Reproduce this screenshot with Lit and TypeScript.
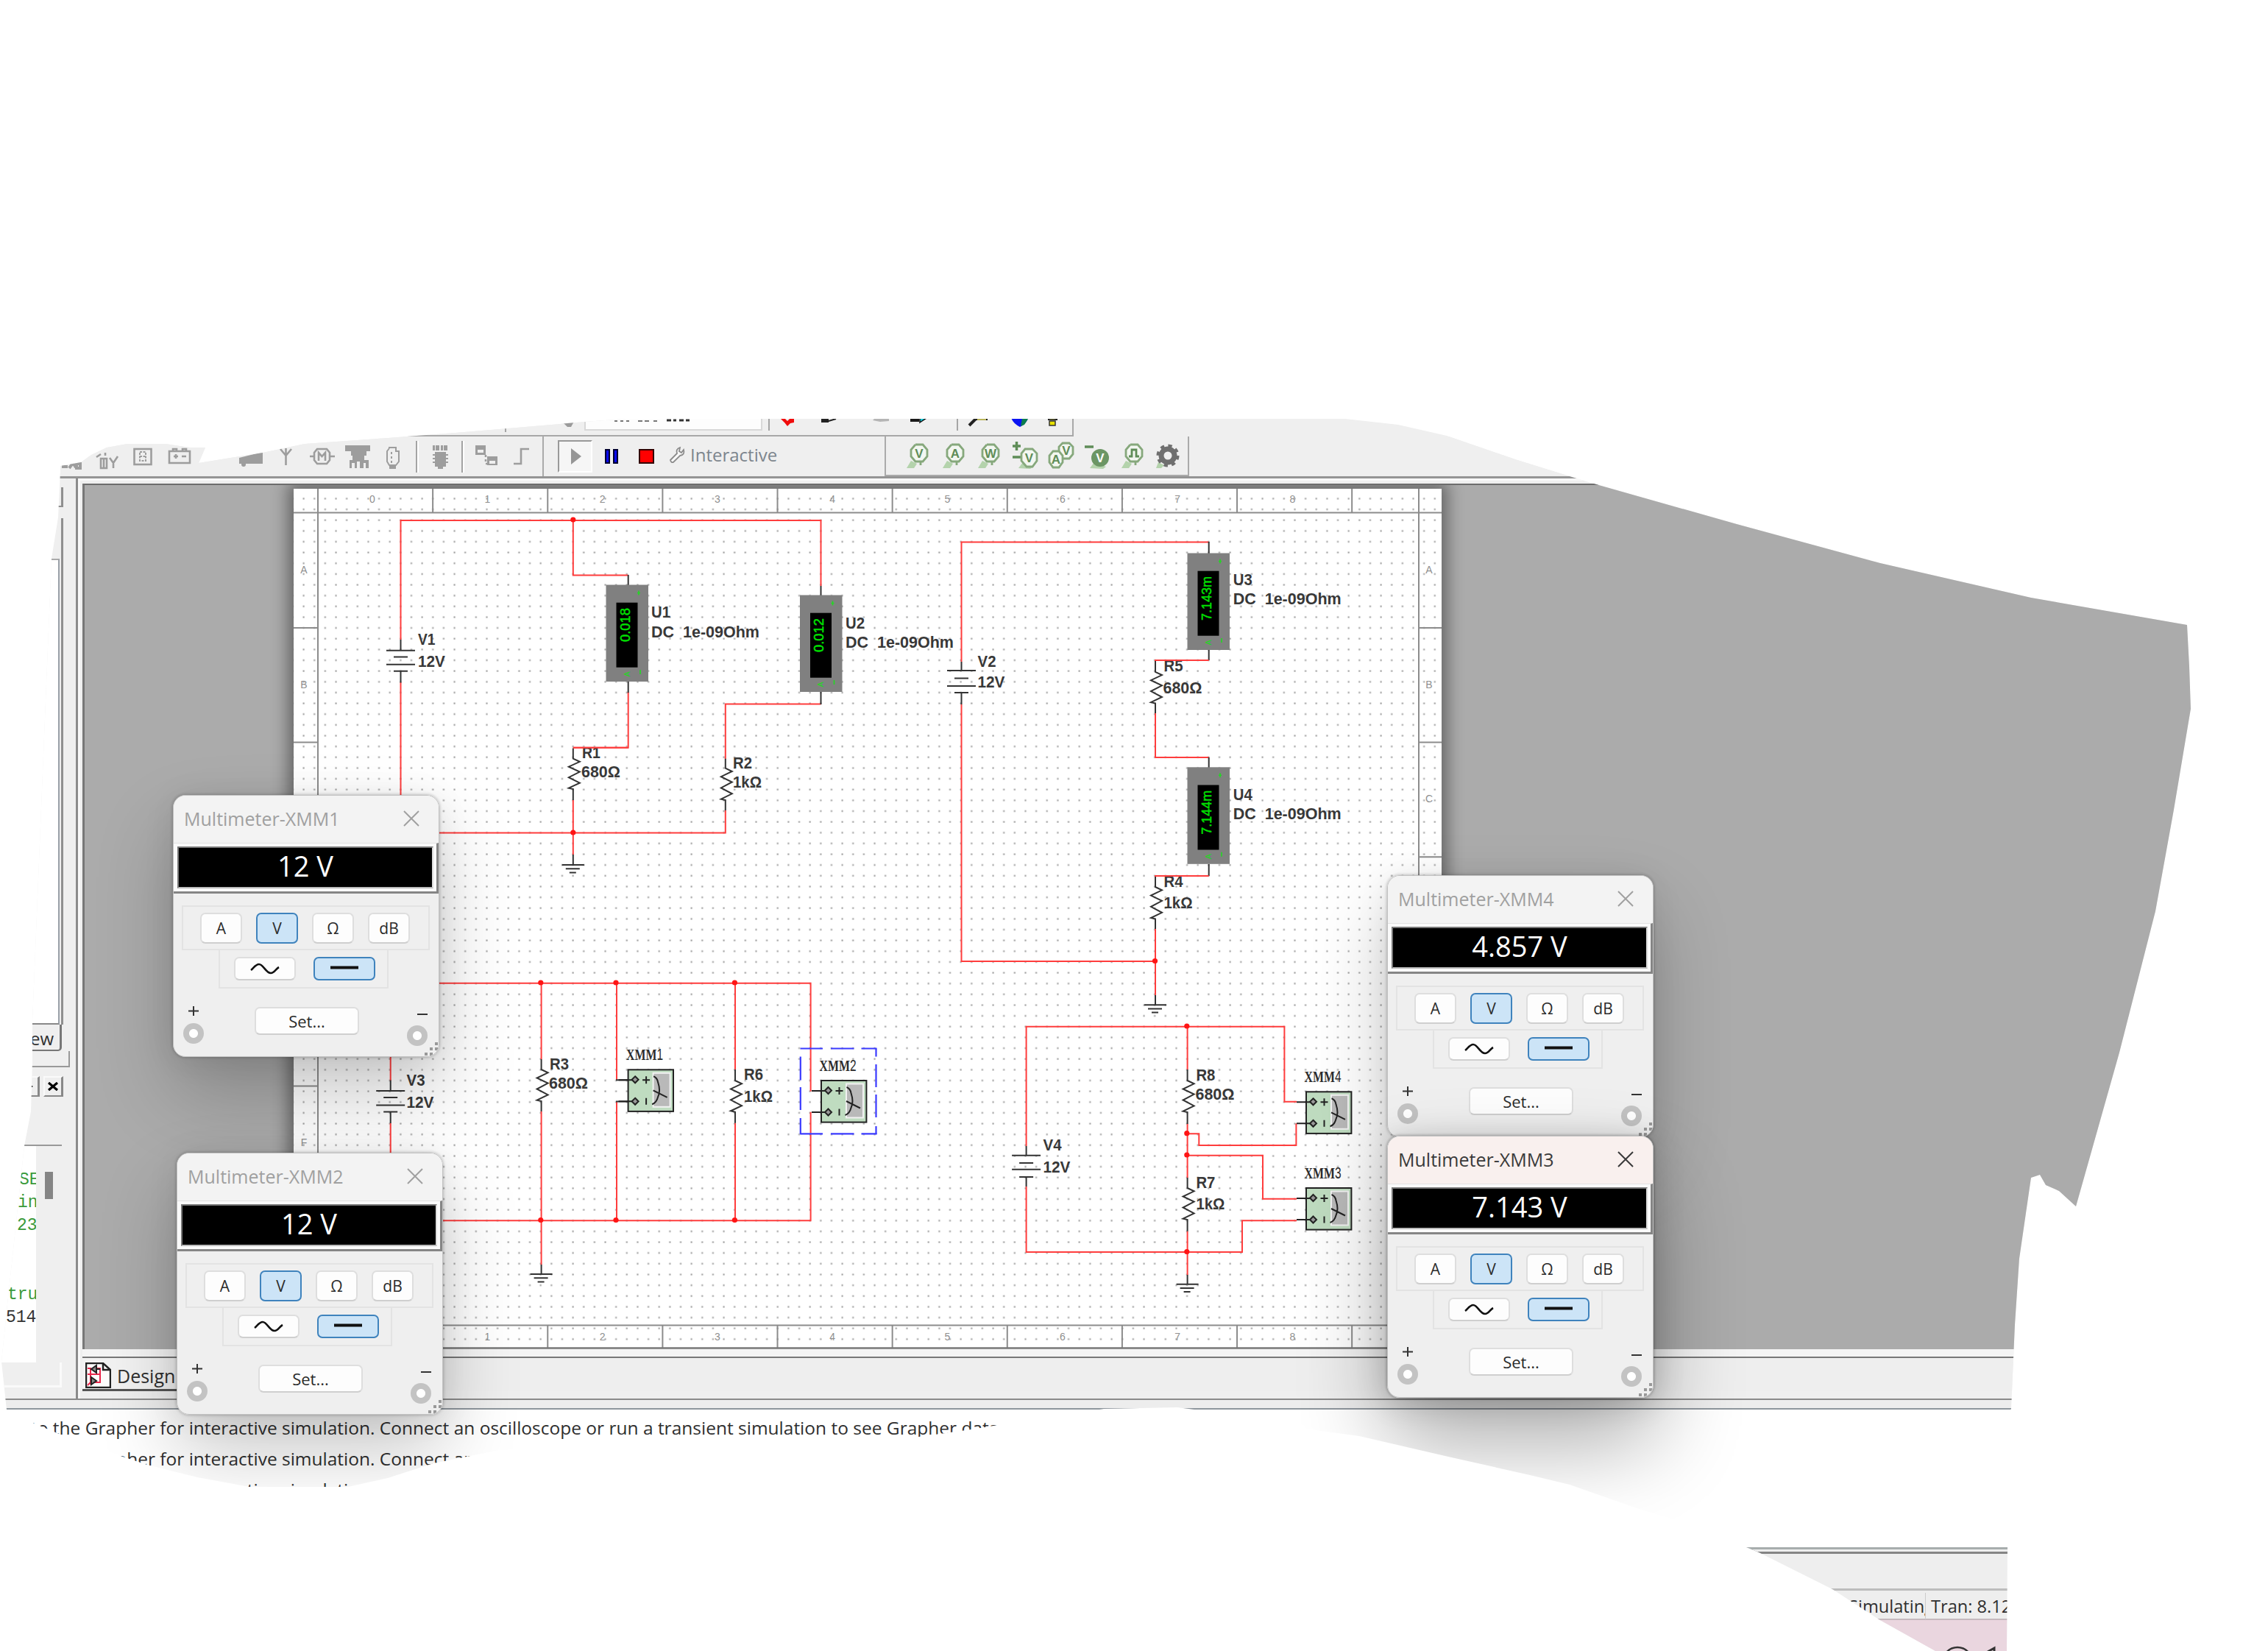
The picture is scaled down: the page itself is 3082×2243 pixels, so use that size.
import { LitElement, html, svg, css } from "lit";
import { customElement, property } from "lit/decorators.js";
import { classMap } from "lit/directives/class-map.js";

const RED = "#ff3d3d";

/* ---------- schematic primitives ---------- */

const wire = (points: string) => svg`<polyline points=${points} fill="none" stroke=${RED} stroke-width="2"></polyline>`;
const lead = (points: string) => svg`<polyline points=${points} fill="none" stroke="#333" stroke-width="2"></polyline>`;
const node = (x: number, y: number) => svg`<circle cx=${x} cy=${y} r="3.6" fill="#ff1414"></circle>`;

const label = (x: number, y: number, value: string, width: number) =>
  svg`<text class="lbl" x=${x} y=${y} textLength=${width} lengthAdjust="spacingAndGlyphs">${value}</text>`;

const battery = (x: number, top: number, plates: number[], bottom: number) => svg`
  <g stroke="#333" stroke-width="2">
    <path d="M${x} ${top}V${plates[0]}M${x} ${plates[3]}V${bottom}"></path>
    <path d="M${x - 19.5} ${plates[0]}h39M${x - 9.5} ${plates[1]}h19M${x - 19.5} ${plates[2]}h39M${x - 9.5} ${plates[3]}h19"></path>
  </g>`;

/* top lead, zigzag body, bottom lead */
const resistor = (x: number, top: number, a: number, b: number, bottom: number) => {
  const s = (b - a) / 12;
  const at = (n: number) => (a + s * n).toFixed(1);
  return svg`<path fill="none" stroke="#333" stroke-width="2"
    d="M${x} ${top}V${a}L${x + 9} ${at(1.2)}L${x - 6} ${at(3.2)}L${x + 9} ${at(5.2)}L${x - 6} ${at(7.4)}L${x + 9} ${at(9.6)}L${x - 6} ${at(11.6)}L${x} ${b}V${bottom}"></path>`;
};

const ground = (x: number, top: number, y: number) => svg`
  <path stroke="#333" stroke-width="2" d="M${x} ${top}V${y}M${x - 15} ${y}h30M${x - 10} ${y + 5.2}h19M${x - 5} ${y + 10.4}h9"></path>`;

const ammeter = (x: number, y: number, reading: string, length: number) => svg`
  <rect x=${x} y=${y} width="57.5" height="131.5" fill="#808080"></rect>
  <rect x=${x + 14} y=${y + 24.2} width="29" height="88" fill="#000"></rect>
  <text class="led" transform="translate(${x + 32.3} ${y + 31.5 + length}) rotate(-90)" textLength=${length} lengthAdjust="spacingAndGlyphs">${reading}</text>
  <text class="ledS" transform="translate(${x + 32} ${y + 125}) rotate(-90)">A</text>
  <path d="M${x + 46.5} ${y + 115.5}v6M${x + 44.5} ${y + 8}v6M${x + 42.5} ${y + 11}h4" stroke="#22d822" stroke-width="1.6"></path>`;

const meter = (x: number, y: number, digit: string) => svg`
  <text class="xm" x=${x - 2.5} y=${y - 13} textLength="50" lengthAdjust="spacingAndGlyphs">XMM<tspan class="digit">${digit}</tspan></text>
  <rect x=${x} y=${y} width="61.4" height="56.6" fill="#bfdcc0" stroke="#222" stroke-width="2"></rect>
  <rect x=${x + 34} y=${y + 4.5} width="23" height="46" fill="#b9b9b9" stroke="#f2f2f2" stroke-width="2"></rect>
  <g fill="none" stroke="#222" stroke-width="2">
    <path d="M${x - 13} ${y + 14}h22M${x - 13} ${y + 43}h22"></path>
    <path fill="#999" d="M${x + 9.5} ${y + 9}l4.5 4.5l-4.5 4.5l-4.5 -4.5zM${x + 9.5} ${y + 38.5}l4.5 4.5l-4.5 4.5l-4.5 -4.5z"></path>
    <path d="M${x + 19.5} ${y + 14}h10M${x + 24.5} ${y + 9}v10M${x + 24.5} ${y + 38.5}v9"></path>
    <path d="M${x + 34.5} ${y + 9}q5 2 6 8q4 12 0 20q-2 8 -8 10M${x + 34} ${y + 28}l19 9.5"></path>
  </g>`;

const COLS = [0, 1, 2, 3, 4, 5, 6, 7, 8];
const ROWS = ["A", "B", "C", "D", "E", "F", "G"];

@customElement("schematic-sheet")
class SchematicSheet extends LitElement {
  static styles = css`
    :host { display: block; width: 1560px; height: 1169px; }
    svg { display: block; }
    .lbl { font: bold 21.500px "Liberation Sans", Arial, sans-serif; fill: #383838; }
    .xm { font: bold 22px "Liberation Serif", serif; fill: #2c2c2c; }
    .digit { font: 21.500px "Liberation Sans", Arial, sans-serif; }
    .led { font: 18px "Liberation Sans", Arial, sans-serif; fill: #00e000; stroke: #00e000; stroke-width: .5; }
    .ledS { font: 11px "Liberation Sans", Arial, sans-serif; fill: #22d822; }
    .zone { font: 14px "Liberation Sans", Arial, sans-serif; fill: #8f8f8f; text-anchor: middle; }
  `;

  private frame() {
    return svg`
      <g stroke="#8c8c8c" stroke-width="2" fill="none">
        <path d="M399 696.5H1959M399 1800.5H1959M432 664V1833M1928 664V1833"></path>
        ${COLS.map((i) => svg`<path d="M${432 + (i + 1) * 156.13} 664v32M${432 + (i + 1) * 156.13} 1801v31"></path>`)}
        ${ROWS.map((_, i) => svg`<path d="M399 ${853 + i * 155.6}h33M1928 ${853 + i * 155.6}h31"></path>`)}
      </g>
      <path d="M399 1831.5H1959" stroke="#777" stroke-width="2.5"></path>
      ${COLS.map((i) => svg`
        <text class="zone" x=${506 + i * 156.3} y="683">${i}</text>
        <text class="zone" x=${506 + i * 156.3} y="1821">${i}</text>`)}
      ${ROWS.map((r, i) => svg`
        <text class="zone" x="413" y=${779 + i * 155.6}>${r}</text>
        <text class="zone" x="1942" y=${779 + i * 155.6}>${r}</text>`)}`;
  }

  private parallelAmps() {
    return svg`
      ${wire("544.5,869 544.5,707 1115.5,707 1115.5,796")}
      ${wire("778.8,707 778.8,781.5 853.7,781.5")}
      ${wire("544.5,927 544.5,1131.5 985.8,1131.5 985.8,1101")}
      ${wire("853.7,940 853.7,1015.7 778.8,1015.7")}
      ${wire("778.8,1087 778.8,1161")}
      ${wire("1115.5,956.5 985.8,956.5 985.8,1031")}
      ${lead("853.7,781 853.7,795")}${lead("853.7,926 853.7,941")}
      ${lead("1115.5,796 1115.5,809")}${lead("1115.5,940 1115.5,957")}
      ${battery(544.5, 869, [883.7, 892.5, 902.8, 911.8], 927.5)}
      ${resistor(778.8, 1016.5, 1030.7, 1072, 1087)}
      ${resistor(985.8, 1030.7, 1043.7, 1087, 1101)}
      ${ground(778.8, 1161, 1175)}
      ${node(778.8, 706)}${node(778.8, 1131)}
      ${ammeter(823.5, 794.5, "0.018", 46)}${ammeter(1087, 808.5, "0.012", 46)}
      ${label(568, 876, "V1", 23.5)}${label(568, 906, "12V", 37)}
      ${label(885, 839, "U1", 26)}${label(885, 865.5, "DC\u00a0\u00a01e-09Ohm", 147)}
      ${label(1149, 854, "U2", 26)}${label(1149, 880, "DC\u00a0\u00a01e-09Ohm", 147)}
      ${label(791, 1030, "R1", 25)}${label(790, 1055.7, "680Ω", 53)}
      ${label(996, 1043.7, "R2", 26)}${label(996, 1070, "1kΩ", 39)}
      ${wire("778.8,1015.7 853.7,1015.7")}`;
  }

  private seriesAmps() {
    return svg`
      ${wire("1306.5,899 1306.5,736.5 1642.7,736.5")}
      ${wire("1306.5,957 1306.5,1306 1570,1306")}
      ${wire("1570,969 1570,1029 1642.7,1029")}
      ${wire("1570,1262 1570,1352")}
      ${lead("1642.7,736 1642.7,752")}${lead("1642.7,882 1642.7,897")}
      ${lead("1642.7,1029 1642.7,1043")}${lead("1642.7,1174 1642.7,1190")}
      ${battery(1306.5, 899, [911, 921.5, 932, 941], 957)}
      ${resistor(1570, 898, 912.8, 955.5, 969)}
      ${resistor(1570, 1191, 1205, 1248.5, 1262)}
      ${ground(1570, 1352, 1365.2)}
      ${node(1569.5, 1305.5)}
      ${ammeter(1613.5, 751.5, "7.143m", 60)}${ammeter(1613.5, 1042.3, "7.144m", 60)}
      ${label(1328.5, 905.5, "V2", 25)}${label(1328.5, 934.4, "12V", 37)}
      ${label(1675.7, 794.8, "U3", 26)}${label(1675.7, 821, "DC\u00a0\u00a01e-09Ohm", 147)}
      ${label(1675.7, 1087.3, "U4", 26)}${label(1675.7, 1113, "DC\u00a0\u00a01e-09Ohm", 147)}
      ${label(1581.5, 912, "R5", 26)}${label(1580.5, 942, "680Ω", 53)}
      ${label(1581.5, 1204.8, "R4", 26)}${label(1581.5, 1233.8, "1kΩ", 39)}
      ${wire("1642.7,897 1569,897")}${wire("1642.7,1190 1569,1190")}`;
  }

  private parallelVolts() {
    return svg`
      ${wire("530.7,1468 530.7,1335.7 1101.6,1335.7 1101.6,1482.7")}
      ${wire("530.7,1526 530.7,1658.3 1101.6,1658.3 1101.6,1510.7")}
      ${wire("735.6,1335.7 735.6,1439")}${wire("735.6,1510 735.6,1718")}
      ${wire("838,1335.7 838,1467.3")}${wire("838,1496.5 838,1658.3")}
      ${wire("999,1335.7 999,1453")}${wire("999,1525.7 999,1658.3")}
      ${battery(530.7, 1467.6, [1482, 1491, 1501.5, 1510.5], 1526)}
      ${resistor(735.6, 1439, 1453, 1496, 1510)}
      ${resistor(999, 1453, 1468, 1510.7, 1525.7)}
      ${ground(735.6, 1718, 1731)}
      ${[734.8, 837, 998.4].map((x) => [node(x, 1335), node(x, 1657.5)])}
      ${lead("837,1467.3 854,1467.3")}${lead("837,1496.5 854,1496.5")}
      ${meter(853.6, 1453.3, "1")}
      ${meter(1116, 1468, "2")}
      <g stroke="#3b3bff" stroke-width="2.2">
        <path d="M1087.5 1424.5h30.5M1129 1424.5h31.5M1170.5 1424.5h21M1087.5 1540.3h30.5M1129 1540.3h31.5M1170.5 1540.3h21"></path>
        <path d="M1190.5 1424.5v11M1190.5 1446v31M1190.5 1487v31M1190.5 1530v11M1087.8 1435.5v32M1087.8 1477v31M1087.8 1519v22"></path>
      </g>
      ${label(552.5, 1475.3, "V3", 25)}${label(552.5, 1504.7, "12V", 37)}
      ${label(747, 1452.7, "R3", 26)}${label(746, 1479, "680Ω", 53)}
      ${label(1011, 1467, "R6", 26)}${label(1011, 1496.7, "1kΩ", 39)}`;
  }

  private seriesVolts() {
    return svg`
      ${wire("1394.6,1557 1394.6,1394.7 1745.4,1394.7 1745.4,1496.7 1762,1496.7")}
      ${wire("1394.6,1612 1394.6,1701 1688,1701 1688,1658.3 1762,1658.3")}
      ${wire("1613.6,1394.7 1613.6,1453")}${wire("1613.6,1527 1613.6,1600")}${wire("1613.6,1672.7 1613.6,1732")}
      ${wire("1613.6,1540.3 1629.3,1540.3 1629.3,1556 1761.4,1556 1761.4,1526.3")}
      ${wire("1613.6,1569.7 1716,1569.7 1716,1628.7 1762,1628.7")}
      ${battery(1394.6, 1557, [1569.7, 1580, 1588.7, 1599], 1612)}
      ${resistor(1613.6, 1453, 1468, 1511, 1527)}
      ${resistor(1613.6, 1600, 1614, 1657, 1672.7)}
      ${ground(1613.6, 1732, 1744.7)}
      ${node(1612.8, 1394)}${node(1612.8, 1539.7)}${node(1612.8, 1569)}${node(1612.8, 1700.5)}
      ${meter(1775, 1483.3, "4")}
      ${meter(1775, 1614, "3")}
      ${label(1417.5, 1563, "V4", 25)}${label(1417.5, 1593, "12V", 37)}
      ${label(1625.4, 1468, "R8", 26)}${label(1624.5, 1494, "680Ω", 53)}
      ${label(1625.4, 1614, "R7", 26)}${label(1625.4, 1643, "1kΩ", 39)}`;
  }

  render() {
    return html`
      <svg width="1560" height="1169" viewBox="399 664 1560 1169">
        <defs>
          <pattern id="dots" x="405.2" y="670" width="14.64" height="14.64" patternUnits="userSpaceOnUse">
            <rect x="6.3" y="6.3" width="2.2" height="2.2" fill="#a3a3a3"></rect>
          </pattern>
        </defs>
        <rect x="399" y="664" width="1560" height="1169" fill="#fff"></rect>
        <rect x="399" y="670" width="1560" height="1158" fill="url(#dots)"></rect>
        ${this.frame()}${this.parallelAmps()}${this.seriesAmps()}${this.parallelVolts()}${this.seriesVolts()}
      </svg>`;
  }
}

/* ---------- multimeter instrument window ---------- */

@customElement("multimeter-window")
class MultimeterWindow extends LitElement {
  @property() name = "";
  @property() reading = "";
  @property({ type: Boolean }) active = false;

  static styles = css`
    :host { display: block; width: 362px; height: 356px; font-family: "Open Sans", "Noto Sans", sans-serif; color: #2b2b2b; }
    .win {
      box-sizing: border-box; width: 100%; height: 100%; border-radius: 17px; background: #efefef; overflow: hidden;
      border: 1px solid #c2c2c2; display: flex; flex-direction: column; position: relative;
    }
    .title { height: 64px; flex: none; background: #f3f3f3; display: flex; align-items: center; justify-content: space-between; padding: 0 26px 3px 14px; box-sizing: border-box; font-size: 25px; color: #a0a0a0; }
    .active .title { background: #f9f0ee; color: #3a3a3a; }
    .frame { height: 69px; flex: none; box-sizing: border-box; background: #fafafa; border-bottom: 3px solid #858585; border-right: 3px solid #858585; border-top: 1px solid #e2e2e2; padding: 4px 4px 4px 5px; }
    .lcd { height: 100%; box-sizing: border-box; background: #000; border: 2px solid #777; border-right-color: #ddd; border-bottom-color: #bbb; color: #fff; font-size: 38px; line-height: 48px; text-align: center; }
    .box { box-sizing: border-box; border: 2px solid #e3e3e3; display: flex; align-items: center; flex: none; }
    .modes { margin: 16px 0 0 11px; width: 337px; height: 61px; padding: 0 25px 0 23px; justify-content: space-between; }
    .wave { margin: -2px 0 0 61px; width: 231px; height: 54px; padding: 0 16px 0 19px; justify-content: space-between; }
    .btn { box-sizing: border-box; border: 2px solid #dedede; border-bottom-color: #cfcfcf; border-radius: 7px; background: #fdfdfd; display: flex; align-items: center; justify-content: center; font-size: 21px; }
    .m { width: 57px; height: 42px; }
    .w { width: 84px; height: 32px; }
    .on { background: #cce4f7; border-color: #3f83bd; }
    .foot { flex: 1; display: flex; justify-content: space-between; padding: 0 13px 0 11px; }
    .jack { display: flex; flex-direction: column; align-items: center; width: 32px; }
    .jack i { width: 28px; height: 28px; border-radius: 50%; background: radial-gradient(circle, #fff 0 5.500px, #c3c3c3 6.500px); }
    .jack svg { display: block; }
    .plus { padding-top: 23px; }
    .minus { padding-top: 27px; }
    .set { width: 142px; height: 38px; margin: 25px 0 0 4px; font-size: 22px; }
    .grip { position: absolute; right: 1px; bottom: 1px; }
  `;

  render() {
    return html`
      <div class=${classMap({ win: true, active: this.active })}>
        <div class="title">
          <span>${this.name}</span>
          <svg width="22" height="22" viewBox="0 0 22 22"><path d="M1 1L21 21M21 1L1 21" stroke="currentColor" stroke-width="2"></path></svg>
        </div>
        <div class="frame"><div class="lcd">${this.reading}</div></div>
        <div class="box modes">
          ${["A", "V", "Ω", "dB"].map((m) => html`<div class=${classMap({ btn: true, m: true, on: m === "V" })}>${m}</div>`)}
        </div>
        <div class="box wave">
          <div class="btn w"><svg width="40" height="16" viewBox="0 0 40 16"><path d="M1 10C4 8 7 2 12 2C18 2 21 14 28 14C33 14 35 8 39 6" fill="none" stroke="#111" stroke-width="2.6"></path></svg></div>
          <div class="btn w on"><svg width="40" height="8" viewBox="0 0 40 8"><path d="M1 2.5H39" stroke="#111" stroke-width="4"></path></svg></div>
        </div>
        <div class="foot">
          <div class="jack plus"><svg width="14" height="24" viewBox="0 0 14 24"><path d="M0 7.5H14M7 1V14" stroke="#333" stroke-width="2"></path></svg><i></i></div>
          <div class="btn set">Set...</div>
          <div class="jack minus"><svg width="28" height="23" viewBox="0 0 28 23"><path d="M14 8H28" stroke="#333" stroke-width="2"></path></svg><i></i></div>
        </div>
        <svg class="grip" width="18" height="18" viewBox="0 0 18 18"><path fill="#999" d="M14 0h4v4h-4zM7 7h4v4h-4zM14 7h4v4h-4zM0 14h4v4h-4zM7 14h4v4h-4z"></path></svg>
      </div>`;
  }
}

/* ---------- toolbars ---------- */

const probe = (glyph: string) => svg`
  <path d="M2 36L8 26L16 30L12 36Z" fill="#b4d3ac"></path>
  <path d="M14 4h10l6 7v9l-6 7h-3v5M14 4l-6 7v9l6 7h7" fill="#f3f7f1" stroke="#86a87c" stroke-width="2.8"></path>
  <text x="19" y="22" text-anchor="middle" class="pg">${glyph}</text>`;

@customElement("tool-strip")
class ToolStrip extends LitElement {
  static styles = css`
    :host { display: block; font-family: "Open Sans", "Noto Sans", sans-serif; }
    .upper { height: 24px; width: 1459px; box-sizing: border-box; border-bottom: 2px solid #a8a8a8; border-right: 2px solid #a8a8a8; display: flex; background: #efefef; }
    .lower { height: 54px; display: flex; align-items: center; background: #efefef; }
    .parts { width: 737px; flex: none; }
    .run { width: 465px; height: 54px; flex: none; box-sizing: border-box; border-left: 2px solid #aaa; display: flex; align-items: center; padding-left: 19px; }
    .play { width: 47px; height: 44px; box-sizing: border-box; border: 2px solid #999; border-right-color: #fff; border-bottom-color: #fff; background: #f6f6f6; display: flex; align-items: center; justify-content: center; padding-left: 3px; }
    .pause { margin-left: 17px; }
    .stop { margin-left: 28px; width: 21px; height: 20px; box-sizing: border-box; border: 2px solid #300; background: #f00; }
    .wrench { margin-left: 20px; margin-bottom: 4px; }
    .mode { margin-left: 7px; font-size: 24px; line-height: 30px; color: #7d858d; padding-bottom: 4px; }
    .probes { width: 414px; height: 54px; box-sizing: border-box; border: solid #aaa; border-width: 0 2px 2px 2px; display: flex; align-items: center; gap: 12.600px; padding-left: 26px; }
    .pg { font: bold 17px "Liberation Sans", Arial, sans-serif; fill: #5f8d58; }
    .inv { fill: #fff; }
    svg { display: block; flex: none; }
  `;

  private upper() {
    return html`<svg width="1457" height="22" viewBox="0 570 1457 22">
      <path d="M795 566h240v19H795z" fill="#fdfdfd" stroke="#d8d8d8" stroke-width="2"></path>
      <path d="M835 573h4m4 0h4m4 0h4m12 0h6m3 0h6m6 0h5" stroke="#777" stroke-width="2"></path>
      <path d="M906 572h6m3 0h4m4 0h6m3 0h5" stroke="#333" stroke-width="3"></path>
      <path d="M765 575l6 6l5 0l6 -11h-14z" fill="#9a9a9a"></path>
      <path d="M1045 566v20M1301 566v20M687 580v8" stroke="#a5a5a5" stroke-width="2"></path>
      <path d="M1061 570h6l3 3l3 -3h6v5l-5 1l-4 4l-4 -5z" fill="#f00c0c"></path>
      <path d="M1116 570h9v4h-9M1126 573l10 -3" fill="#222" stroke="#222" stroke-width="2"></path>
      <path d="M1186 572l10 2l12 -1v-3h-20z" fill="#b5b5b5"></path>
      <path d="M1237 569h12v5h-12z" fill="#1a1a1a"></path><path d="M1250 575l9 -6h-9z" fill="#15c8d8" stroke="#111" stroke-width="1.5"></path>
      <path d="M1317 579l9 -9h16" stroke="#222" stroke-width="4" fill="none"></path><path d="M1328 571h12" stroke="#b9b55c" stroke-width="2"></path>
      <path d="M1374 568h23q-1 8 -11 13q-10 -5 -12 -13z" fill="#0b14f2"></path><path d="M1389 570h8l-5 8l-5 2z" fill="#0c7d4e"></path>
      <path d="M1424 568h13v4h-13z" fill="#222"></path><path d="M1426 568h8v3h-8zM1426 573h8v6h-8z" fill="#e8e100" stroke="#333" stroke-width="1.5"></path>
    </svg>`;
  }

  private parts() {
    return html`<svg class="parts" width="737" height="54" viewBox="0 593 737 54">
      <g fill="none" stroke="#9d9d9d" stroke-width="2.6">
        <path d="M84 634h8M94 636l5 -7l4 6M104 630h5v6h-5z" stroke-width="4"></path>
        <path d="M131 621l6 -4M143 619v-4M137 623v13h8v-13zM149 622l5 7l6 -9M154 628v8M141 623v13"></path>
        <rect x="182.5" y="610" width="23" height="21"></rect>
        <path d="M190 614h8v12h-8zM190 620h8" stroke-width="2" stroke-dasharray="3 1.5"></path>
        <path d="M230 613h28v16h-28zM235 613v-3h5v3M248 613v-3h5v3M236 620h6M239 617v6M247 620h6"></path>
        <path d="M388.5 609v23M381 610l7.5 9l7.5 -9"></path>
        <path d="M421 620h7M448 620h7M431 610h13l4 5v10l-4 5h-13l-4 -5v-10zM433 626v-11l4.5 5l4.5 -5v11"></path>
        <path d="M528 608h10v5h4v14l-4 5h-9l-3 -5v-14l3 -4M532 614v3M532 620v3M532 626v3" stroke-width="2"></path>
        <path d="M660 618v12h8" stroke-dasharray="3 3"></path>
        <path d="M698 630h10v-20h11"></path>
      </g>
      <g fill="#9d9d9d">
        <path d="M325 622l32 -8v16h-32z"></path><circle cx="331" cy="631" r="3"></circle>
        <path d="M469 605h34v8h-5v6h-3v6h6v11h-4v-7h-3v7h-5v-9h-4v9h-3v-7h-4v7h-3v-11h4v-6h-2v-6h-8z"></path>
        <path d="M529 632h9v5h-9z"></path>
        <path d="M588 605h3v7h-3zM592 605h5v7h-5zM599 605h3v7h-3zM603 605h5v7h-5zM591 614h15v20h-15zM588 617h21v2h-21zM588 622h21v2h-21zM588 627h21v2h-21zM595 634h7v3h-7z"></path>
        <path d="M646 605h14v13h-14zM662 620h14v12h-14z"></path>
      </g>
      <path d="M649 611h8v4h-8zM665 626h8v4h-8z" fill="#efefef"></path>
      <path d="M566 599v43M628 599v43" stroke="#a3a3a3" stroke-width="2"></path>
      <path d="M568 599v43M630 599v43" stroke="#fff" stroke-width="2"></path>
    </svg>`;
  }

  render() {
    const p = (body: unknown) => html`<svg width="36" height="38" viewBox="0 0 36 38">${body}</svg>`;
    return html`
      <div class="upper">${this.upper()}</div>
      <div class="lower">
        ${this.parts()}
        <div class="run">
          <div class="play"><svg width="16" height="22" viewBox="0 0 16 22"><path d="M1 0L15 11L1 22Z" fill="#969696"></path></svg></div>
          <svg class="pause" width="18" height="20" viewBox="0 0 18 20"><path d="M1 1h5v18h-5zM12 1h5v18h-5z" fill="#0a0af0" stroke="#000030" stroke-width="2"></path></svg>
          <div class="stop"></div>
          <svg class="wrench" width="22" height="24" viewBox="0 0 22 24"><path d="M2 19L11 10Q9 4 15 2L14 7L17 9L20 5Q22 12 15 13L6 22Q3 23 2 19Z" fill="#f8f8f8" stroke="#8b8b8b" stroke-width="1.8"></path></svg>
          <span class="mode">Interactive</span>
        </div>
        <div class="probes">
          ${p(probe("V"))}${p(probe("A"))}${p(probe("W"))}
          ${p(svg`<path d="M8 36l6 -8l14 6l-4 3z" fill="#b4d3ac"></path><path d="M0 6h11M5.5 0v12M0 21h11" stroke="#5f8d58" stroke-width="3.5"></path><path d="M17 10h10l6 6v10l-6 8h-8l-7 -8v-10z" fill="#f3f7f1" stroke="#86a87c" stroke-width="2.8"></path><text x="22.5" y="28" text-anchor="middle" class="pg">V</text>`)}
          ${p(svg`<path d="M20 2h9l5 5v10l-5 6h-9l-5 -6v-10z" fill="#f3f7f1" stroke="#86a87c" stroke-width="2.8"></path><text x="25" y="18" text-anchor="middle" class="pg">V</text><path d="M7 13h8l5 6v9l-5 7h-8l-5 -7v-9z" fill="#f3f7f1" stroke="#86a87c" stroke-width="2.8"></path><text x="11" y="30" text-anchor="middle" class="pg">A</text>`)}
          ${p(svg`<path d="M8 36l6 -8l16 6l-4 3z" fill="#b4d3ac"></path><path d="M1 7h12" stroke="#5f8d58" stroke-width="3.5"></path><circle cx="22" cy="22" r="12" fill="#6c9665"></circle><text x="22" y="28" text-anchor="middle" class="pg inv">V</text>`)}
          ${p(svg`${probe("")}<path d="M12 20h4v-9h6v9h4" fill="none" stroke="#5f8d58" stroke-width="2.8"></path>`)}
          ${p(svg`<path d="M1 36l3 -8l8 4l-4 4z" fill="#b4d3ac"></path><circle cx="17" cy="19" r="9" fill="none" stroke="#6f6f6f" stroke-width="7"></circle><circle cx="17" cy="19" r="13.5" fill="none" stroke="#6f6f6f" stroke-width="4" stroke-dasharray="5.3 5.3"></circle>`)}
        </div>
      </div>`;
  }
}

/* ---------- application shell ---------- */

const WINDOWS = [
  { cls: "w1", name: "Multimeter-XMM1", reading: "12 V", active: false },
  { cls: "w2", name: "Multimeter-XMM2", reading: "12 V", active: false },
  { cls: "w4", name: "Multimeter-XMM4", reading: "4.857 V", active: false },
  { cls: "w3", name: "Multimeter-XMM3", reading: "7.143 V", active: true },
];

const LOG = "to the Grapher for interactive simulation. Connect an oscilloscope or run a transient simulation to see Grapher data.";

@customElement("app-root")
class AppRoot extends LitElement {
  static styles = css`
    :host { display: block; width: 3082px; height: 2243px; background: #fff; font-family: "Open Sans", "Noto Sans", sans-serif; color: #2f2f2f; overflow: hidden; }
    .shell {
      position: relative; box-sizing: border-box; width: 3082px; height: 2243px; padding-top: 569px; display: flex; flex-direction: column; background: #fff;
      clip-path: path("M82 640 L82 633 L110 628 L124 618 L145 608 L173 603 L225 603 L258 608 L279 608 L270 629 L307 623 L357 615 L414 603 L527 595 L631 587 L795 573 L850 569 L1828 569 L1900 577 L1966 592 L2062 625 L2162 656 L2360 712 L2555 765 L2760 812 L2972 849 L2975 905 L2977 963 L2954 1100 L2929 1238 L2880 1430 L2821 1639 L2798 1618 L2780 1610 L2772 1596 L2760 1600 L2744 1710 L2738 1800 L2733 1914 L2600 2070 L2300 2080 L2267 2062 L2227 2050 L2133 2017 L2079 2004 L1968 1979 L1847 1951 L1780 1942 L1700 1925 L1600 1912 L1500 1914 L1420 1927 L1350 1937 L1320 1942 L1241 1953 L1000 1962 L679 1970 L589 1988 L527 2008 L473 2020 L339 2020 L268 2007 L200 1990 L161 1977 L85 1950 L54 1937 L40 1931 L9 1915 L2 1850 L10 1772 L33 1557 L42 1510 L44 1443 L44 1388 L70 759 L79 703 Z M2373 2102 L2728 2102 L2727 2243 L2630 2243 L2553 2200 L2490 2159 L2390 2109 Z");
    }
    tool-strip { flex: none; height: 78px; background: #efefef; }
    .rule { height: 3px; background: #949494; flex: none; }
    .body { display: flex; height: 1250px; flex: none; background: #efefef; }

    .dock { width: 103px; flex: none; box-sizing: border-box; display: flex; flex-direction: column; }
    .stub { width: 86px; height: 27px; margin-top: 12px; box-sizing: border-box; border-right: 3px solid #8f8f8f; border-bottom: 2px solid #8f8f8f; }
    .tree { width: 86px; height: 688px; margin-top: 15px; box-sizing: border-box; border-right: 3px solid #8f8f8f; padding-top: 55px; }
    .leaf { width: 81px; height: 100%; box-sizing: border-box; background: #fff; border-right: 2px solid #9aa0a8; border-top: 2px solid #aaa; border-bottom: 2px solid #888; }
    .tab { width: 84px; height: 36px; box-sizing: border-box; border-right: 3px solid #777; border-bottom: 2px solid #777; border-radius: 0 0 5px 0; font-size: 24px; line-height: 37px; text-align: right; padding-right: 8px; }
    .edge { width: 95px; height: 22px; box-sizing: border-box; border-bottom: 2px solid #999; border-right: 2px solid #999; flex: none; }
    .caps { display: flex; width: 86px; gap: 5px; justify-content: flex-end; margin-top: 12px; }
    .cap { width: 27px; height: 28px; box-sizing: border-box; border: 2px solid #fafafa; border-right: 3px solid #888; border-bottom: 2px solid #888; display: flex; align-items: center; justify-content: center; }
    .sheet { display: flex; margin-top: 65px; width: 84px; height: 296px; border-top: 2px solid #999; box-sizing: border-box; }
    .code { width: 49px; height: 294px; background: #fff; overflow: hidden; font: 23px/31.400px "Liberation Mono", monospace; color: #3a9a3a; white-space: pre; padding-top: 31px; box-sizing: border-box; }
    .code div { height: 31.200px; }
    .i1 { padding-left: 26px; } .i2 { padding-left: 24px; } .i3 { padding-left: 23px; } .i4 { padding-left: 10px; } .i5 { padding-left: 8px; color: #333; }
    .thumb { width: 11px; height: 37px; background: #858585; margin: 35px 0 0 12px; }
    .dockend { width: 84px; height: 34px; border-right: 3px solid #fafafa; border-bottom: 3px solid #fafafa; box-sizing: border-box; flex: none; }

    .center { flex: 1; display: flex; flex-direction: column; border-left: 3px solid #8b8b8b; box-shadow: inset 3px 3px #f8f8f8; padding: 7px 0 0 6px; box-sizing: border-box; min-width: 0; }
    .work { height: 1176px; flex: none; box-sizing: border-box; background: #ababab; border-left: 3px solid #777; border-top: 2px solid #6d6d6d; padding: 5px 0 0 284px; overflow: hidden; }
    .paper { width: 1560px; height: 1169px; box-shadow: 0 0 20px 8px rgba(0,0,0,.4); }
    .gap { height: 12px; flex: none; background: #f4f4f4; border-bottom: 2px solid #777; box-sizing: border-box; }
    .tabs { height: 45px; display: flex; flex: none; background: #eee; }
    .doc { width: 260px; height: 45px; box-sizing: border-box; border-bottom: 3px solid #555; background: #f2f2f2; display: flex; align-items: center; padding: 5px 0 0 4px; gap: 8px; font-size: 25px; line-height: 36px; }
    .split { height: 15px; flex: none; background: #ededed; border-top: 2px solid #8b8b8b; border-bottom: 2px solid #8e969d; box-sizing: border-box; }
    .log { height: 187px; flex: none; box-sizing: border-box; padding: 4px 0 0 42px; font-size: 24.500px; line-height: 42px; white-space: nowrap; background: #fff; overflow: hidden; }

    .status { height: 141px; flex: none; box-sizing: border-box; padding-left: 2340px; background: #eee; border-top: 3px solid #a7adad; display: flex; flex-direction: column; box-shadow: inset 0 3px #eee, inset 0 6px #858585; }
    .msg { margin-top: 53px; height: 43px; box-sizing: border-box; border-top: 3px solid #bdbdbd; border-bottom: 2px solid #c5b9be; display: flex; align-items: center; font-size: 23.600px; padding-top: 3px; }
    .cell { width: 277px; height: 36px; line-height: 36px; box-sizing: border-box; overflow: hidden; padding-left: 172px; border-right: 1px solid #ccc; }
    .cell2 { padding-left: 7px; line-height: 36px; white-space: nowrap; }
    .task { flex: 1; background: #ead6df; }
    .task svg { display: block; }

    multimeter-window { position: absolute; }
    .cast { position: absolute; width: 362px; height: 356px; border-radius: 17px; box-shadow: 0 50px 104px rgba(0,0,0,.22), 0 4px 44px rgba(0,0,0,.08), 0 0 4px rgba(0,0,0,.3); }
    .w1 { left: 235px; top: 1080px; }
    .w2 { left: 240px; top: 1566px; }
    .w4 { left: 1885px; top: 1189px; }
    .w3 { left: 1885px; top: 1543px; }
    .cast.w3 { box-shadow: 0 60px 120px rgba(0,0,0,.33), 0 4px 44px rgba(0,0,0,.16), 0 0 4px rgba(0,0,0,.4); }
  `;

  private dock() {
    return html`
      <div class="dock">
        <div class="stub"></div>
        <div class="tree"><div class="leaf"></div></div>
        <div class="tab">ew</div>
        <div class="edge"></div>
        <div class="caps">
          <div class="cap"><svg width="12" height="12"><path d="M0 6h8M4 3l5 3l-5 3" stroke="#111" stroke-width="2" fill="none"></path></svg></div>
          <div class="cap"><svg width="14" height="12"><path d="M1 1L13 11M13 1L1 11" stroke="#000" stroke-width="3.2"></path></svg></div>
        </div>
        <div class="sheet">
          <div class="code"><div class="i1">SE</div><div class="i2">in</div><div class="i3">23</div><div></div><div></div><div class="i4">tru</div><div class="i5">514</div></div>
          <div class="thumb"></div>
        </div>
        <div class="dockend"></div>
      </div>`;
  }

  render() {
    return html`
      <div class="shell">
        <tool-strip></tool-strip>
        <div class="rule"></div>
        <div class="body">
          ${this.dock()}
          <div class="center">
            <div class="work"><div class="paper"><schematic-sheet></schematic-sheet></div></div>
            <div class="gap"></div>
            <div class="tabs">
              <div class="doc">
                <svg width="35" height="35" viewBox="0 0 35 35">
                  <path d="M1 1H24L34 10V34H1Z" fill="#fdfdfd" stroke="#222" stroke-width="2.5"></path>
                  <path d="M24 1V10H34" fill="none" stroke="#222" stroke-width="2.5"></path>
                  <path d="M3 8H8M3 16H20V27H12M7 8V30M3 31L8 26M14 8H20V16" fill="none" stroke="#e8274b" stroke-width="2"></path>
                  <path d="M8 9l7 -5v10zM15 9h5M8 20l7 5l-7 5z" fill="#888" stroke="#222" stroke-width="2"></path>
                </svg>
                Design
              </div>
            </div>
          </div>
        </div>
        <div class="split"></div>
        <div class="log">${[0, 1, 2].map(() => html`<div>${LOG}</div>`)}</div>
        <div class="status">
          <div class="msg"><div class="cell">Simulating</div><div class="cell2">Tran: 8.12</div></div>
          <div class="task"><svg width="420" height="42" viewBox="0 0 420 42"><circle cx="320" cy="57" r="20" fill="none" stroke="#333" stroke-width="2.5"></circle><path d="M361 43l9 -5v6" fill="none" stroke="#333" stroke-width="3"></path></svg></div>
        </div>
        ${WINDOWS.map((w) => html`
          <div class="cast ${w.cls}"></div>
          <multimeter-window class=${w.cls} .name=${w.name} .reading=${w.reading} .active=${w.active}></multimeter-window>`)}
      </div>`;
  }
}
